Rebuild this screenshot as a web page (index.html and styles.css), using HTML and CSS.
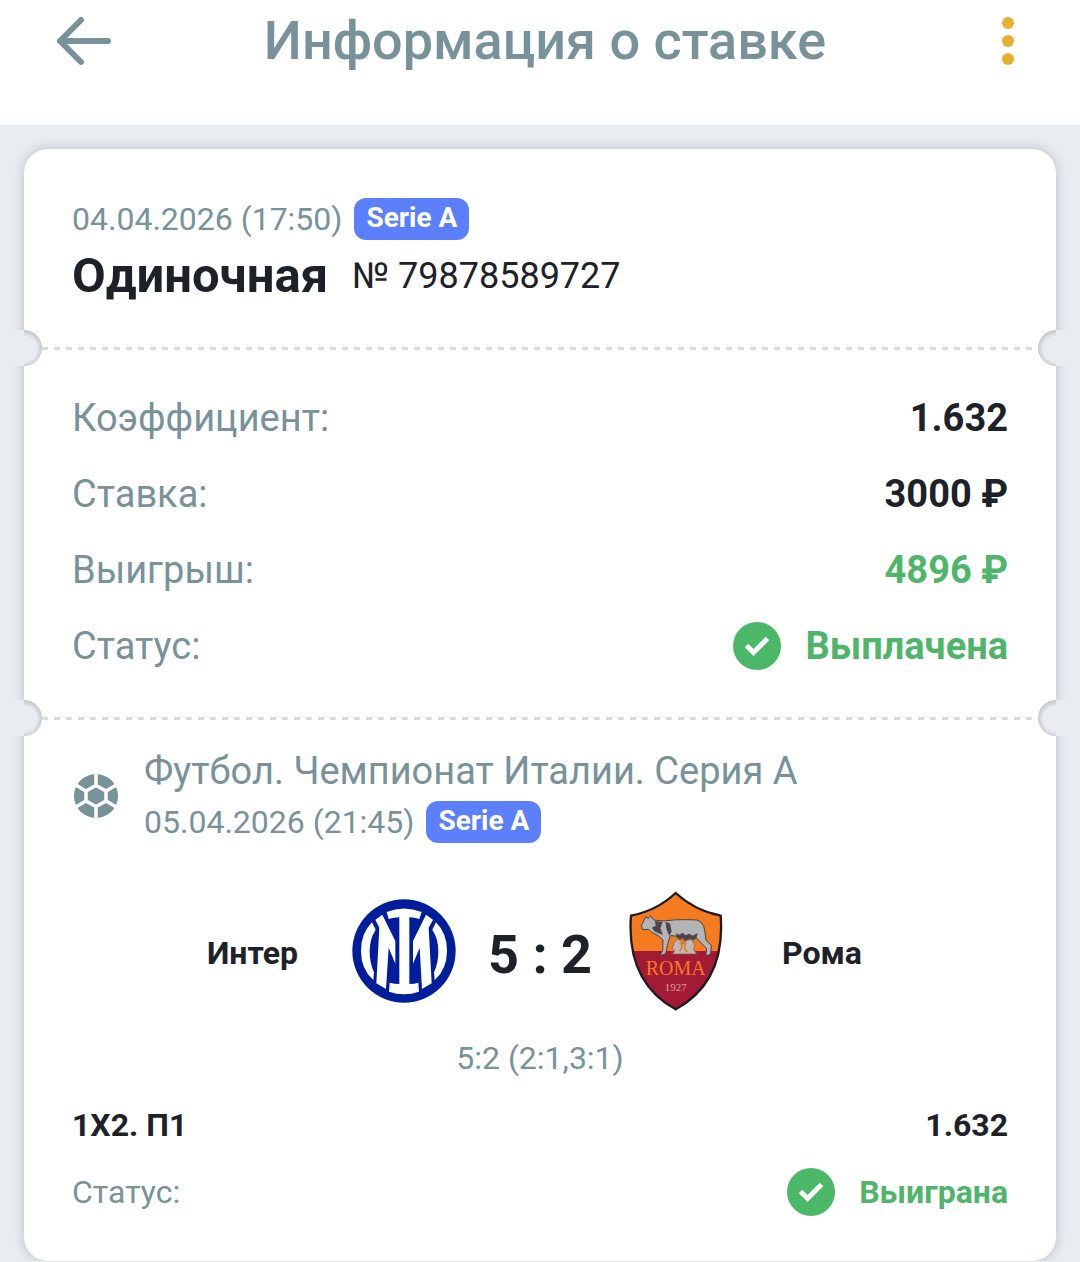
FILE: index.html
```html
<!DOCTYPE html>
<html lang="ru">
<head>
<meta charset="utf-8">
<meta name="viewport" content="width=device-width, initial-scale=1">
<title>Информация о ставке</title>
<link rel="stylesheet" href="styles.css">
</head>
<body>
<header class="topbar">
  <button class="icon-button back" type="button" aria-label="Назад">
    <svg width="60" height="52" viewBox="0 0 60 52" fill="none" stroke="currentColor" stroke-width="6" stroke-linecap="round" stroke-linejoin="round"><path d="M54 26H6M27 5L6 26L27 47"/></svg>
  </button>
  <h1 class="topbar-title">Информация о ставке</h1>
  <button class="icon-button menu" type="button" aria-label="Меню">
    <svg width="12" height="48" viewBox="0 0 12 48" fill="currentColor"><circle cx="6" cy="6" r="6"/><circle cx="6" cy="24" r="6"/><circle cx="6" cy="42" r="6"/></svg>
  </button>
</header>
<main class="page">
  <article class="ticket">
    <section class="summary">
      <div class="date-row"><time datetime="2026-04-04T17:50">04.04.2026 (17:50)</time><span class="badge">Serie A</span></div>
      <div class="name-row"><h2 class="bet-type">Одиночная</h2><span class="bet-number">№ 79878589727</span></div>
    </section>
    <div class="tear"></div>
    <dl class="details">
      <div class="row"><dt>Коэффициент:</dt><dd>1.632</dd></div>
      <div class="row"><dt>Ставка:</dt><dd>3000 ₽</dd></div>
      <div class="row"><dt>Выигрыш:</dt><dd class="win">4896 ₽</dd></div>
      <div class="row"><dt>Статус:</dt><dd class="win status">
        <svg width="48" height="48" viewBox="0 0 48 48"><circle cx="24" cy="24" r="24" fill="#4ab866"/><path d="M13.500 23.500L20.500 30.500L34.500 16.500" fill="none" stroke="#fff" stroke-width="5"/></svg>Выплачена</dd></div>
    </dl>
    <div class="tear"></div>
    <section class="event">
      <div class="event-head">
        <svg class="sport" width="48" height="48" viewBox="0 0 48 48"><circle cx="24" cy="24" r="22" fill="#78929a"/><g fill="none" stroke="#fff" stroke-width="3.500"><path d="M24 13.500L34 19V29L24 34.500L14 29V19Z"/><path d="M24 0V14M24 34V48M34 19L46 12M34 29L46 36M14 19L2 12M14 29L2 36"/></g></svg>
        <div class="event-info">
          <h3 class="league">Футбол. Чемпионат Италии. Серия А</h3>
          <div class="date-row"><time datetime="2026-04-05T21:45">05.04.2026 (21:45)</time><span class="badge">Serie A</span></div>
        </div>
      </div>
      <div class="match">
        <span class="team home">Интер</span>
        <svg class="crest" width="104" height="104" viewBox="39 42 312 312" aria-label="Интер">
          <circle cx="195" cy="198" r="155" fill="#001e9b"/>
          <g fill="#fff">
            <path d="M143 81Q195 60 248 81L241 102Q227 97 211 97V297Q226 297 238 293L240 320Q195 335 150 320L152 293Q166 297 181 297V97Q163 97 149 102Z"/>
            <path d="M109 104L130 89L169 168V236L149 188L141 312L112 295L121 128Z"/>
            <path d="M282 104L261 89L222 168V236L242 188L249 312L278 295L269 128Z"/>
            <path d="M99 112L110 134Q92 162 92 198Q92 235 105 262L103 286Q66 252 66 198Q66 145 99 112Z"/>
            <path d="M291 112L280 134Q298 162 298 198Q298 235 285 262L287 286Q324 252 324 198Q324 145 291 112Z"/>
          </g>
        </svg>
        <strong class="score">5 : 2</strong>
        <svg class="crest" width="94" height="120" viewBox="42 18 282 360" aria-label="Рома">
          <defs><clipPath id="shield"><path d="M182 24Q240 77 317 92Q332 290 182 373Q33 290 48 92Q125 77 182 24Z"/></clipPath></defs>
          <g clip-path="url(#shield)"><path fill="#f47b20" d="M40 10H330V200H40Z"/><path fill="#a31a37" d="M40 198H330V380H40Z"/></g>
          <path d="M182 24Q240 77 317 92Q332 290 182 373Q33 290 48 92Q125 77 182 24Z" fill="none" stroke="#211b20" stroke-width="7"/>
          <path d="M79 122L86 108L92 95L100 101L107 92L116 105L145 108Q182 103 218 104L245 105Q266 112 269 136L273 166L289 181L287 208L272 212L275 191L256 171L243 158L217 155L184 153L166 152L159 174L152 206L135 212L143 196L144 165L134 155L109 141L101 133L83 134Z" fill="#b3b4b6" stroke="#4a4245" stroke-width="3" stroke-linejoin="round"/>
          <path d="M120 108L143 111L136 130L144 150L120 140L110 128L122 122ZM151 110L165 115L170 140L163 152L155 135ZM184 145L193 149L203 143L212 151L222 146L233 152L248 144L244 161L236 164L229 176L224 164L209 168L203 160L195 164L184 157Z" fill="#4d4548"/>
          <path d="M178 172L187 163L198 167L204 178L215 166L229 163L239 177L236 194L245 207H173L179 196L171 191Z" fill="#c2b8b2" stroke="#7b574a" stroke-width="2"/>
          <path d="M195 172L202 184L194 198M213 174L208 190L217 202" fill="none" stroke="#e57927" stroke-width="5"/>
          <text x="182" y="269" text-anchor="middle" class="crest-name">ROMA</text>
          <text x="182" y="319" text-anchor="middle" class="crest-year">1927</text>
        </svg>
        <span class="team away">Рома</span>
      </div>
      <p class="periods">5:2 (2:1,3:1)</p>
      <div class="outcome strong"><span>1Х2. П1</span><span>1.632</span></div>
      <div class="outcome"><span>Статус:</span><span class="win status">
        <svg width="48" height="48" viewBox="0 0 48 48"><circle cx="24" cy="24" r="24" fill="#4ab866"/><path d="M13.500 23.500L20.500 30.500L34.500 16.500" fill="none" stroke="#fff" stroke-width="5"/></svg>Выиграна</span></div>
    </section>
  </article>
</main>
</body>
</html>
```
FILE: styles.css
```css
* { box-sizing: border-box; }
body {
  margin: 0;
  background: #e9edf2;
  color: #1d2229;
  font-family: Roboto, "Noto Sans", sans-serif;
}
h1, h2, h3, p, dl, dd { margin: 0; }
svg { display: block; flex: none; }

.topbar {
  display: flex;
  align-items: center;
  justify-content: space-between;
  padding: 5px 54px 48px;
  background: #fff;
  color: #78929a;
}
.topbar-title { font-size: 54px; line-height: 72px; font-weight: 500; }
.icon-button {
  display: flex;
  width: 60px;
  padding: 0;
  border: 0;
  background: none;
  color: inherit;
}
.back { width: 70px; }
.menu { justify-content: flex-end; padding-right: 12px; color: #e6b02e; }

.page { padding: 24px 24px 0; }
.ticket {
  background: #fff;
  border-radius: 24px;
  box-shadow: 0 0 12px rgba(30, 40, 55, 0.25);
}
.summary { padding: 48px 48px 36px; }
.date-row {
  display: flex;
  align-items: center;
  gap: 12px;
  height: 44px;
  color: #78929a;
  font-size: 32px;
  line-height: 44px;
}
.badge {
  height: 42px;
  padding: 0 12px;
  border-radius: 12px;
  background: #5c80fc;
  color: #fff;
  font-size: 28px;
  line-height: 40px;
  font-weight: 700;
}
.name-row { display: flex; align-items: center; gap: 24px; line-height: 70px; }
.bet-type { font-size: 49px; font-weight: 700; }
.bet-number { font-size: 36px; }

.tear {
  position: relative;
  height: 3px;
  margin: 0 18px;
  background: repeating-linear-gradient(90deg, #d9dbdc 0 6px, transparent 6px 12px);
}
.tear::before, .tear::after {
  content: "";
  position: absolute;
  top: -17px;
  width: 42px;
  height: 36px;
  background-color: #e9edf2;
  background-size: 18px 36px;
  background-repeat: no-repeat;
}
.tear::before {
  left: -42px;
  border-radius: 0 18px 18px 0;
  background-image: radial-gradient(circle 18px at 0 19px, #e9edf2 70%, #c6cace 100%);
  background-position: right top;
}
.tear::after {
  right: -42px;
  border-radius: 18px 0 0 18px;
  background-image: radial-gradient(circle 18px at 18px 19px, #e9edf2 70%, #c6cace 100%);
  background-position: left top;
}

.details { padding: 30px 48px 33px; }
.row {
  display: flex;
  align-items: center;
  justify-content: space-between;
  height: 76px;
  font-size: 38px;
}
.row dt { color: #78929a; }
.row dd { font-weight: 700; }
.row .win, .outcome .win { color: #4fb56b; }
.status { display: flex; align-items: center; gap: 24px; font-weight: 700; }

.event { padding: 23px 48px 36px; }
.event-head { display: flex; align-items: center; gap: 24px; }
.sport { margin-top: 4px; }
.league { color: #78929a; font-size: 38px; line-height: 57px; font-weight: 400; }
.match {
  display: grid;
  grid-template-columns: 1fr 136px 136px 136px 1fr;
  align-items: center;
  justify-items: center;
  margin-top: 46px;
  height: 122px;
}
.team { padding: 4px 38px 0; font-size: 32px; font-weight: 700; }
.home { justify-self: end; }
.away { justify-self: start; }
.score { padding-top: 6px; font-size: 54px; font-weight: 700; }
.crest-name { fill: #f47b20; font: 60px "Liberation Serif", serif; }
.crest-year { fill: #d9a0a5; font: 33px "Liberation Serif", serif; }
.periods {
  margin: 22px 0 9px;
  color: #78929a;
  font-size: 32px;
  line-height: 48px;
  text-align: center;
}
.outcome {
  display: flex;
  align-items: center;
  justify-content: space-between;
  height: 67px;
  color: #78929a;
  font-size: 32px;
}
.strong { color: #1d2229; font-weight: 700; }
```
